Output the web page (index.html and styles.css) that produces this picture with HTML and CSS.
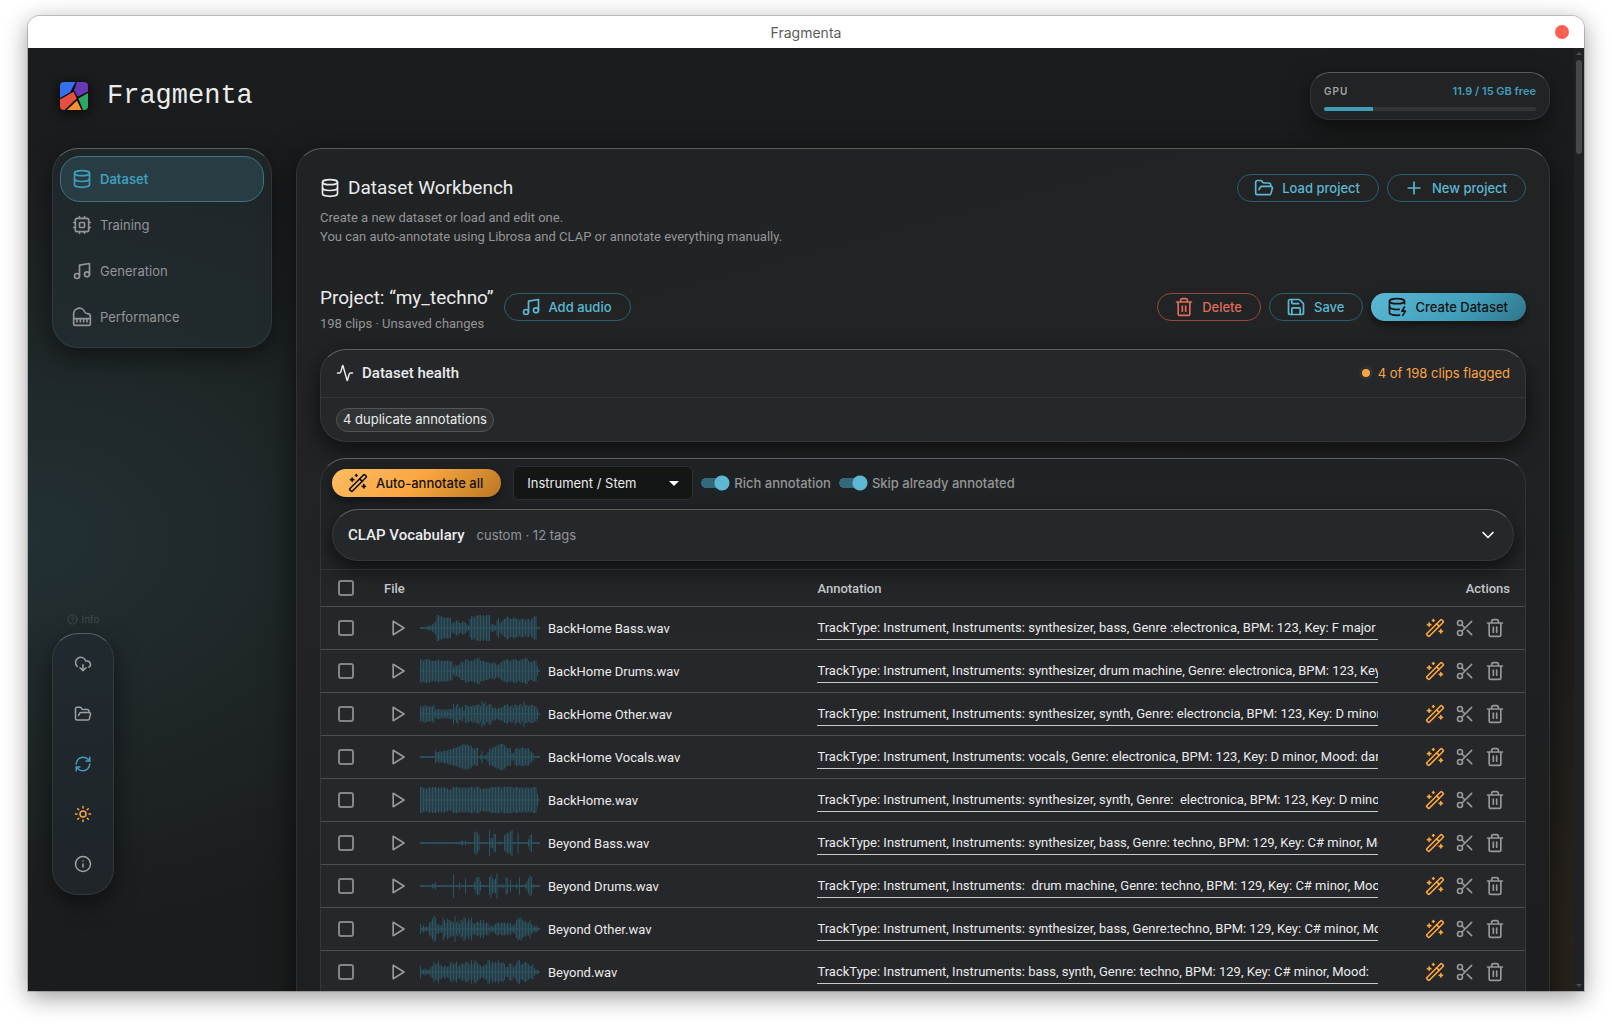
FILE: index.html
```html
<!DOCTYPE html>
<html lang="en">
<head>
    <meta charset="UTF-8">
    <meta name="viewport" content="width=device-width, initial-scale=1.0">
    <title>Fragmenta</title>
    <link rel="stylesheet" href="styles.css">
</head>
<body>

<svg class="sprite" aria-hidden="true">
    <symbol id="database" viewBox="0 0 24 24"><ellipse cx="12" cy="5" rx="9" ry="3"/><path d="M3 5v14a9 3 0 0 0 18 0V5"/><path d="M3 12a9 3 0 0 0 18 0"/></symbol>
    <symbol id="database-zap" viewBox="0 0 24 24"><ellipse cx="12" cy="5" rx="9" ry="3"/><path d="M3 5v14a9 3 0 0 0 12 2.84"/><path d="M21 5v3"/><path d="M21 12l-3 5h4l-3 5"/><path d="M3 12a9 3 0 0 0 11.59 2.87"/></symbol>
    <symbol id="cpu" viewBox="0 0 24 24"><rect x="4" y="4" width="16" height="16" rx="2"/><rect x="9" y="9" width="6" height="6" rx="1"/><path d="M15 2v2M15 20v2M2 15h2M2 9h2M20 15h2M20 9h2M9 2v2M9 20v2"/></symbol>
    <symbol id="music" viewBox="0 0 24 24"><path d="M9 18V5l12-2v13"/><circle cx="6" cy="18" r="3"/><circle cx="18" cy="16" r="3"/></symbol>
    <symbol id="piano" viewBox="0 0 24 24"><path d="M18.5 8c-1.4 0-2.6-.8-3.2-2A6.87 6.87 0 0 0 2 9v11a2 2 0 0 0 2 2h16a2 2 0 0 0 2-2v-8.5C22 9.6 20.4 8 18.5 8"/><path d="M2 14h20M6 14v4M10 14v4M14 14v4M18 14v4"/></symbol>
    <symbol id="folder-open" viewBox="0 0 24 24"><path d="m6 14 1.5-2.9A2 2 0 0 1 9.24 10H20a2 2 0 0 1 1.94 2.5l-1.54 6a2 2 0 0 1-1.95 1.5H4a2 2 0 0 1-2-2V5a2 2 0 0 1 2-2h3.9a2 2 0 0 1 1.69.9l.81 1.2a2 2 0 0 0 1.67.9H18a2 2 0 0 1 2 2v2"/></symbol>
    <symbol id="plus" viewBox="0 0 24 24"><path d="M5 12h14M12 5v14"/></symbol>
    <symbol id="trash" viewBox="0 0 24 24"><path d="M3 6h18M19 6v14a2 2 0 0 1-2 2H7a2 2 0 0 1-2-2V6M8 6V4a2 2 0 0 1 2-2h4a2 2 0 0 1 2 2v2M10 11v6M14 11v6"/></symbol>
    <symbol id="save" viewBox="0 0 24 24"><path d="M15.2 3a2 2 0 0 1 1.4.6l3.8 3.8a2 2 0 0 1 .6 1.4V19a2 2 0 0 1-2 2H5a2 2 0 0 1-2-2V5a2 2 0 0 1 2-2z"/><path d="M17 21v-7a1 1 0 0 0-1-1H8a1 1 0 0 0-1 1v7M7 3v4a1 1 0 0 0 1 1h7"/></symbol>
    <symbol id="activity" viewBox="0 0 24 24"><path d="M22 12h-2.48a2 2 0 0 0-1.93 1.46l-2.35 8.36a.25.25 0 0 1-.48 0L9.24 2.18a.25.25 0 0 0-.48 0l-2.35 8.36A2 2 0 0 1 4.49 12H2"/></symbol>
    <symbol id="wand" viewBox="0 0 24 24"><path d="m21.64 3.64-1.28-1.28a1.21 1.21 0 0 0-1.72 0L2.36 18.64a1.21 1.21 0 0 0 0 1.72l1.28 1.28a1.2 1.2 0 0 0 1.72 0L21.64 5.36a1.2 1.2 0 0 0 0-1.72"/><path d="m14 7 3 3M5 6v4M19 14v4M10 2v2M7 8H3M21 16h-4M11 3H9"/></symbol>
    <symbol id="scissors" viewBox="0 0 24 24"><circle cx="6" cy="6" r="3"/><path d="M8.12 8.12 12 12M20 4 8.12 15.88"/><circle cx="6" cy="18" r="3"/><path d="M14.8 14.8 20 20"/></symbol>
    <symbol id="play" viewBox="0 0 24 24"><path d="M5 4l13 8-13 8z"/></symbol>
    <symbol id="chevron" viewBox="0 0 24 24"><path d="m6 9 6 6 6-6"/></symbol>
    <symbol id="help" viewBox="0 0 24 24"><circle cx="12" cy="12" r="10"/><path d="M9.09 9a3 3 0 0 1 5.83 1c0 2-3 3-3 3M12 17h.01"/></symbol>
    <symbol id="cloud" viewBox="0 0 24 24"><path d="M12 13v8l-4-4M12 21l4-4"/><path d="M4.39 15.27A7 7 0 1 1 15.71 8h1.79a4.5 4.5 0 0 1 2.44 8.28"/></symbol>
    <symbol id="refresh" viewBox="0 0 24 24"><path d="M3 12a9 9 0 0 1 9-9 9.75 9.75 0 0 1 6.74 2.74L21 8"/><path d="M21 3v5h-5"/><path d="M21 12a9 9 0 0 1-9 9 9.75 9.75 0 0 1-6.74-2.74L3 16"/><path d="M8 16H3v5"/></symbol>
    <symbol id="sun" viewBox="0 0 24 24"><circle cx="12" cy="12" r="4"/><path d="M12 2v2M12 20v2M4.93 4.93l1.41 1.41M17.66 17.66l1.41 1.41M2 12h2M20 12h2M6.34 17.66l-1.41 1.41M19.07 4.93l-1.41 1.41"/></symbol>
    <symbol id="info" viewBox="0 0 24 24"><circle cx="12" cy="12" r="10"/><path d="M12 16v-4M12 8h.01"/></symbol>
</svg>

<div class="window">
    <div class="titlebar">
        <span>Fragmenta</span>
        <button class="close" aria-label="Close"></button>
    </div>

    <div class="app">
        <div class="content">
            <header class="header">
                <div class="brand">
                    <svg class="logo" viewBox="0 0 28 28" aria-hidden="true">
                        <defs><clipPath id="logo-clip"><rect width="28" height="28" rx="4"/></clipPath></defs>
                        <g clip-path="url(#logo-clip)">
                            <path fill="#3370ee" d="M0 0h15.500L10 10.500 0 16z"/>
                            <path fill="#6638b4" d="M17 0h11v9.500L17.800 14.800 14 8.500z"/>
                            <path fill="#e8503e" d="M0 17.500 13.500 9.800 16.800 16.500 4.500 28H0z"/>
                            <path fill="#2fa566" d="M28 11v17h-5L18.300 16.500z"/>
                            <path fill="#f6912c" d="M7 28 17 18.500 21.500 28z"/>
                        </g>
                    </svg>
                    <span class="brand-name">Fragmenta</span>
                </div>
                <div class="gpu">
                    <div class="gpu-row">
                        <span class="gpu-label">GPU</span>
                        <span class="gpu-value">11.9 / 15 GB free</span>
                    </div>
                    <div class="gpu-bar"><div class="gpu-fill" style="width: 23%"></div></div>
                </div>
            </header>

            <div class="layout">
                <aside class="sidebar">
                    <nav class="nav">
                        <a href="#" class="nav-item active"><svg class="icon"><use href="#database"/></svg>Dataset</a>
                        <a href="#" class="nav-item"><svg class="icon"><use href="#cpu"/></svg>Training</a>
                        <a href="#" class="nav-item"><svg class="icon"><use href="#music"/></svg>Generation</a>
                        <a href="#" class="nav-item"><svg class="icon"><use href="#piano"/></svg>Performance</a>
                    </nav>
                    <div class="dock-area">
                        <div class="dock-label"><svg class="icon"><use href="#help"/></svg>Info</div>
                        <div class="dock">
                            <button aria-label="Download models"><svg class="icon"><use href="#cloud"/></svg></button>
                            <button aria-label="Open folder"><svg class="icon"><use href="#folder-open"/></svg></button>
                            <button class="teal" aria-label="Refresh"><svg class="icon"><use href="#refresh"/></svg></button>
                            <button class="orange" aria-label="Toggle theme"><svg class="icon"><use href="#sun"/></svg></button>
                            <button aria-label="About"><svg class="icon"><use href="#info"/></svg></button>
                        </div>
                    </div>
                </aside>

                <main class="panel">
                    <div class="row">
                        <h1><svg class="icon"><use href="#database"/></svg>Dataset Workbench</h1>
                        <div class="buttons">
                            <button class="btn"><svg class="icon"><use href="#folder-open"/></svg>Load project</button>
                            <button class="btn"><svg class="icon"><use href="#plus"/></svg>New project</button>
                        </div>
                    </div>
                    <p class="intro">Create a new dataset or load and edit one.<br>You can auto-annotate using Librosa and CLAP or annotate everything manually.</p>

                    <div class="row project">
                        <div class="project-info">
                            <div>
                                <h2>Project: “my_techno”</h2>
                                <p class="muted">198 clips · Unsaved changes</p>
                            </div>
                            <button class="btn"><svg class="icon"><use href="#music"/></svg>Add audio</button>
                        </div>
                        <div class="buttons">
                            <button class="btn danger"><svg class="icon"><use href="#trash"/></svg>Delete</button>
                            <button class="btn"><svg class="icon"><use href="#save"/></svg>Save</button>
                            <button class="btn primary"><svg class="icon"><use href="#database-zap"/></svg>Create Dataset</button>
                        </div>
                    </div>

                    <section class="card health">
                        <div class="health-head">
                            <h3><svg class="icon"><use href="#activity"/></svg>Dataset health</h3>
                            <span class="flagged">4 of 198 clips flagged</span>
                        </div>
                        <div class="health-body"><span class="chip">4 duplicate annotations</span></div>
                    </section>

                    <section class="card clips">
                        <div class="toolbar">
                            <button class="btn auto"><svg class="icon"><use href="#wand"/></svg>Auto-annotate all</button>
                            <div class="select">
                                <select aria-label="Annotation type"><option>Instrument / Stem</option></select>
                                <svg class="caret" viewBox="0 0 10 5" aria-hidden="true"><path d="M0 0h10L5 5z"/></svg>
                            </div>
                            <label class="switch"><input type="checkbox" checked>Rich annotation</label>
                            <label class="switch"><input type="checkbox" checked>Skip already annotated</label>
                        </div>
                        <button class="vocab">
                            <span class="vocab-title">CLAP Vocabulary</span>
                            <span class="vocab-meta">custom · 12 tags</span>
                            <svg class="icon"><use href="#chevron"/></svg>
                        </button>
                        <table>
                            <thead>
                                <tr>
                                    <th class="col-check"><input type="checkbox" class="check" aria-label="Select all"></th>
                                    <th class="col-file">File</th>
                                    <th>Annotation</th>
                                    <th class="col-actions">Actions</th>
                                </tr>
                            </thead>
                            <tbody id="clips"></tbody>
                        </table>
                    </section>
                </main>
            </div>
        </div>
        <div class="scrollbar" aria-hidden="true">
            <svg viewBox="0 0 6 3"><path d="M0 3 3 0l3 3z"/></svg>
            <div class="thumb"></div>
            <svg viewBox="0 0 6 3"><path d="M0 0h6L3 3z"/></svg>
        </div>
    </div>
</div>

<script src="script.js"></script>
</body>
</html>
```

FILE: script.js
```js
// Each clip: file name, annotation, waveform peaks (one digit per bar, 0 = silence)
const clips = [
    ['BackHome Bass.wav',
     'TrackType: Instrument, Instruments: synthesizer, bass, Genre :electronica, BPM: 123, Key: F major',
     '00000111234998877777733455334432168878999898999222157345678766776656665665678800'],
    ['BackHome Drums.wav',
     'TrackType: Instrument, Instruments: synthesizer, drum machine, Genre: electronica, BPM: 123, Key',
     '88788887777787777777672434466688777788997776665556544567788777888778889976677730'],
    ['BackHome Other.wav',
     'TrackType: Instrument, Instruments: synthesizer, synth, Genre: electroncia, BPM: 123, Key: D minor',
     '55565555562333232323337467445266555656675978567744434445667556476567596656665530'],
    ['BackHome Vocals.wav',
     'TrackType: Instrument, Instruments: vocals, Genre: electronica, BPM: 123, Key: D minor, Mood: dark',
     '00000000004334344445556667788989887656601401136567788999876662256656665664320000'],
    ['BackHome.wav',
     'TrackType: Instrument, Instruments: synthesizer, synth, Genre:  electronica, BPM: 123, Key: D minor',
     '99888898999898989887789999898989899989998788888999999989999999899989898989899940'],
    ['Beyond Bass.wav',
     'TrackType: Instrument, Instruments: synthesizer, bass, Genre: techno, BPM: 129, Key: C# minor, Mood',
     '00000000000000000000000000011010000078750000009336600100567789000700000025600000'],
    ['Beyond Drums.wav',
     'TrackType: Instrument, Instruments:  drum machine, Genre: techno, BPM: 129, Key: C# minor, Mood',
     '00000000112000000000008000200050000025663000006854590101065040001060001357610000'],
    ['Beyond Other.wav',
     'TrackType: Instrument, Instruments: synthesizer, bass, Genre:techno, BPM: 129, Key: C# minor, Mood',
     '31211145798332286476554945365874758434546463441212344344434342236878655446321210'],
    ['Beyond.wav',
     'TrackType: Instrument, Instruments: bass, synth, Genre: techno, BPM: 129, Key: C# minor, Mood:',
     '41121113475685434434675674456577658578654345588576768667533565346885567654452110']
];

const icon = name => `<svg class="icon"><use href="#${name}"/></svg>`;

function waveform(peaks) {
    const step = 120 / peaks.length;
    let bars = '';
    [...peaks].forEach((peak, i) => {
        const half = peak === '0' ? 1 : 1 + peak * 12 / 9;
        bars += `M${i * step + 0.5} ${(13 - half).toFixed(1)}v${(half * 2).toFixed(1)}`;
    });
    return `<svg class="wave" viewBox="0 0 120 26"><path class="wave-base" d="M0 13h120"/><path d="${bars}"/></svg>`;
}

document.getElementById('clips').innerHTML = clips.map(([name, text, peaks]) => `
    <tr>
        <td class="col-check"><input type="checkbox" class="check" aria-label="Select ${name}"></td>
        <td class="col-file"><div class="file">
            <button class="icon-btn" aria-label="Play">${icon('play')}</button>
            ${waveform(peaks)}<span>${name}</span>
        </div></td>
        <td><input type="text" class="annotation" aria-label="Annotation for ${name}" value="${text}"></td>
        <td class="col-actions"><div class="actions">
            <button class="icon-btn orange" aria-label="Auto-annotate">${icon('wand')}</button>
            <button class="icon-btn" aria-label="Trim">${icon('scissors')}</button>
            <button class="icon-btn" aria-label="Delete">${icon('trash')}</button>
        </div></td>
    </tr>`).join('');
```

FILE: styles.css
```css
:root {
    --teal: #409eba;
    --teal-light: #5cb8d3;
    --orange: #f9a63f;
    --text: #ebebeb;
    --muted: #949597;
    --line: rgba(255, 255, 255, 0.08);
    --line-top: rgba(255, 255, 255, 0.26);
    --ui: Inter, "Liberation Sans", sans-serif;
    --body: Roboto, "Liberation Sans", sans-serif;
}
* {
    box-sizing: border-box;
}
body {
    margin: 0;
    height: 100vh;
    padding: 16px 28px 40px;
    background: #fff;
    color: var(--text);
    font-family: var(--body);
    font-size: 13px;
}
h1, h2, h3, p {
    margin: 0;
    font-weight: 400;
}
button, input, select {
    font-family: inherit;
    font-size: inherit;
    color: inherit;
}
button {
    padding: 0;
    border: none;
    background: none;
    cursor: pointer;
}
.sprite {
    display: none;
}
.icon {
    width: 20px;
    height: 20px;
    flex: none;
    fill: none;
    stroke: currentColor;
    stroke-width: 2;
    stroke-linecap: round;
    stroke-linejoin: round;
}
.teal {
    color: var(--teal);
}
.orange {
    color: var(--orange);
}

/* window */
.window {
    height: 100%;
    display: flex;
    flex-direction: column;
    border-radius: 12px 12px 0 0;
    box-shadow: 0 0 0 1px rgba(0, 0, 0, 0.18), 0 6px 24px rgba(0, 0, 0, 0.4);
}
.titlebar {
    height: 32px;
    flex: none;
    display: grid;
    grid-template-columns: 1fr auto 1fr;
    align-items: center;
    padding: 0 15px;
    border-radius: 12px 12px 0 0;
    background: #fff;
    color: #5b5b5b;
    font-family: var(--ui);
    font-size: 14px;
}
.titlebar span {
    grid-column: 2;
}
.close {
    justify-self: end;
    width: 14px;
    height: 14px;
    border-radius: 50%;
    background: #ff5f52;
}
.app {
    flex: 1;
    min-height: 0;
    display: flex;
    overflow: hidden;
    background:
        radial-gradient(ellipse 50% 60% at 0% 52%, rgba(60, 120, 130, 0.22), transparent 70%),
        radial-gradient(ellipse 30% 50% at 100% 95%, rgba(150, 90, 20, 0.12), transparent 90%),
        #1b1c1d;
}
.content {
    flex: 1;
    min-width: 0;
    display: flex;
    flex-direction: column;
    padding: 24px 24px 0;
}
.scrollbar {
    width: 10px;
    display: flex;
    flex-direction: column;
    align-items: center;
    gap: 5px;
    padding: 4px 0;
    background: #202124;
}
.scrollbar svg {
    width: 6px;
    height: 3px;
    fill: #4c4d50;
}
.scrollbar svg:last-child {
    margin-top: auto;
}
.thumb {
    width: 6px;
    height: 10%;
    border-radius: 3px;
    background: #47484b;
}

/* header */
.header {
    display: flex;
    justify-content: space-between;
    margin-bottom: 28px;
}
.brand {
    display: flex;
    align-items: center;
    gap: 19px;
    padding-left: 8px;
}
.logo {
    width: 28px;
    height: 28px;
    filter: drop-shadow(0 2px 6px #000);
}
.brand-name {
    font-family: "Liberation Mono", monospace;
    font-size: 27px;
    line-height: 44px;
}
.gpu {
    width: 240px;
    height: 48px;
    padding: 11px 13px 0;
    border: 1px solid var(--line);
    border-top-color: var(--line-top);
    border-radius: 20px;
    background: #222325;
    box-shadow: 0 8px 24px rgba(0, 0, 0, 0.5);
    font-family: var(--ui);
    font-size: 11px;
    font-weight: 600;
    line-height: 14px;
}
.gpu-row {
    display: flex;
    justify-content: space-between;
}
.gpu-label {
    font-size: 10px;
    letter-spacing: 1px;
    color: #a5a6a8;
}
.gpu-value {
    color: var(--teal);
}
.gpu-bar {
    height: 4px;
    margin-top: 9px;
    border-radius: 2px;
    background: #343538;
    overflow: hidden;
}
.gpu-fill {
    height: 100%;
    background: var(--teal);
}

/* layout */
.layout {
    flex: 1;
    min-height: 0;
    display: grid;
    grid-template-columns: 220px minmax(0, 1fr);
    grid-template-rows: minmax(0, 1fr);
    gap: 24px;
}
.sidebar {
    display: flex;
    flex-direction: column;
    justify-content: space-between;
    align-items: flex-start;
    padding-bottom: 96px;
}
.nav, .dock, .panel, .card, .vocab {
    border: 1px solid var(--line);
    border-top-color: var(--line-top);
    border-radius: 26px;
}
.nav {
    width: 100%;
    padding: 7px;
    background: rgba(38, 50, 56, 0.45);
    box-shadow: 0 8px 24px rgba(0, 0, 0, 0.5);
}
.nav-item {
    height: 46px;
    display: flex;
    align-items: center;
    gap: 8px;
    padding: 0 11px;
    border: 1px solid transparent;
    border-radius: 20px;
    color: var(--muted);
    font-family: var(--ui);
    text-decoration: none;
}
.nav-item.active {
    border-color: #3f7481;
    background: #283c44;
    color: var(--teal);
    font-weight: 600;
}
.dock-label {
    display: flex;
    align-items: center;
    justify-content: center;
    gap: 4px;
    height: 16px;
    margin-bottom: 6px;
    color: #43494b;
    font-family: var(--ui);
    font-size: 10px;
}
.dock-label .icon {
    width: 11px;
    height: 11px;
}
.dock {
    display: flex;
    flex-direction: column;
    padding: 5px;
    background: rgba(34, 42, 48, 0.6);
    box-shadow: 0 8px 24px rgba(0, 0, 0, 0.5);
}
.dock button {
    width: 50px;
    height: 50px;
    display: flex;
    align-items: center;
    justify-content: center;
    color: #a0a1a3;
}
.dock .teal {
    color: var(--teal);
}
.dock .orange {
    color: var(--orange);
}
.dock .icon {
    width: 18px;
    height: 18px;
}

/* panel */
.panel {
    align-self: start;
    padding: 25px 23px 23px;
    background: linear-gradient(165deg, #202325, #222324 40%, #1f2021 60%, #1c1d1e);
    box-shadow: 0 8px 32px rgba(0, 0, 0, 0.6);
}
.row {
    display: flex;
    align-items: center;
    justify-content: space-between;
}
.buttons {
    display: flex;
    gap: 8px;
}
h1 {
    display: flex;
    align-items: center;
    gap: 8px;
    font-size: 19px;
    line-height: 28px;
}
h2 {
    font-size: 19px;
    line-height: 33px;
}
.intro {
    margin-top: 6px;
}
.intro, .muted {
    line-height: 19px;
    color: var(--muted);
}
.btn {
    height: 28px;
    display: flex;
    align-items: center;
    gap: 8px;
    padding: 0 18px 0 16px;
    border: 1px solid #2d5f70;
    border-radius: 14px;
    color: var(--teal-light);
    font-family: var(--ui);
    font-weight: 500;
}
.btn.danger {
    border-color: #92493f;
    color: #df6b5b;
}
.btn.primary, .btn.auto {
    border: none;
    color: #121212;
    box-shadow: 0 4px 10px rgba(0, 0, 0, 0.5);
}
.btn.primary {
    background: linear-gradient(135deg, #5cb8d3, #409eba 60%, #2f7589);
}
.btn.auto {
    background: linear-gradient(135deg, #fdbc62, #f9a63f 50%, #bb7623);
}
.project {
    margin: 35px 0 16px;
}
.project-info {
    display: flex;
    align-items: center;
    gap: 10px;
}

/* cards */
.health {
    background: #25272a;
    box-shadow: 0 8px 24px rgba(0, 0, 0, 0.6);
}
.health-head {
    height: 48px;
    display: flex;
    align-items: center;
    justify-content: space-between;
    padding: 0 15px 2px;
    border-bottom: 1px solid var(--line);
}
h3 {
    display: flex;
    align-items: center;
    gap: 8px;
    font-size: 15px;
    font-weight: 500;
}
h3 .icon {
    width: 18px;
    height: 18px;
}
.flagged {
    display: flex;
    align-items: center;
    gap: 8px;
    color: var(--orange);
    font-family: var(--ui);
}
.flagged::before {
    content: "";
    width: 8px;
    height: 8px;
    border-radius: 50%;
    background: var(--orange);
    box-shadow: 0 0 0 3px #303134;
}
.health-body {
    padding: 10px 15px 9px;
    display: flex;
}
.chip {
    height: 24px;
    padding: 0 6px;
    border: 1px solid #535657;
    border-radius: 12px;
    background: #303436;
    font-family: var(--ui);
    line-height: 21px;
}
.clips {
    margin-top: 16px;
    padding-bottom: 40px;
    background: linear-gradient(#1f2224, #25272a 180px);
}
.toolbar {
    display: flex;
    align-items: center;
    gap: 8px;
    padding: 7px 11px 9px;
}
.btn.auto {
    margin-right: 4px;
}
.select {
    position: relative;
    width: 180px;
}
.select select {
    appearance: none;
    display: block;
    width: 100%;
    height: 34px;
    padding: 0 13px;
    border: 1px solid #2e2f30;
    border-radius: 6px;
    background: #141515;
    font-family: var(--ui);
}
.caret {
    position: absolute;
    right: 14px;
    top: 15px;
    width: 10px;
    height: 5px;
    fill: #fff;
    pointer-events: none;
}
.switch {
    display: flex;
    align-items: center;
    gap: 4px;
    color: var(--muted);
    font-family: var(--ui);
    font-weight: 500;
}
.switch input {
    appearance: none;
    width: 29px;
    height: 16px;
    margin: 0;
    border-radius: 8px;
    background:
        radial-gradient(circle at 21px 8px, var(--teal-light) 7px, transparent 8px),
        linear-gradient(#33697b, #33697b) 5px 3px / 16px 10px no-repeat,
        radial-gradient(circle at 5px 8px, #33697b 5px, transparent 5px);
}
.vocab {
    width: calc(100% - 22px);
    height: 52px;
    margin: 0 11px 8px;
    display: flex;
    align-items: center;
    gap: 12px;
    padding: 0 15px;
    background: #25282b;
    box-shadow: 0 8px 20px rgba(0, 0, 0, 0.6);
}
.vocab-title {
    font-size: 15px;
    font-weight: 500;
}
.vocab-meta {
    color: var(--muted);
    font-family: var(--ui);
}
.vocab .icon {
    margin-left: auto;
    color: #fff;
}

/* table */
table {
    width: 100%;
    table-layout: fixed;
    border-collapse: collapse;
    border-top: 1px solid rgba(255, 255, 255, 0.08);
}
th {
    height: 37px;
    padding: 0 12px;
    text-align: left;
    font-size: 13px;
    font-weight: 500;
    color: #c4c5c6;
}
th.col-actions {
    text-align: right;
}
td {
    height: 43px;
    padding: 0 12px;
}
tr {
    border-bottom: 1px solid #4c4d4f;
}
.col-check {
    width: 51px;
    padding: 0 17px;
}
.col-file {
    width: 36%;
}
.col-actions {
    width: 135px;
    padding: 0 15px;
}
.check {
    appearance: none;
    display: block;
    width: 16px;
    height: 16px;
    margin: 0;
    border: 2px solid #848587;
    border-radius: 3px;
}
.file {
    display: flex;
    align-items: center;
}
.file .icon-btn {
    margin-right: 6px;
}
.file span {
    margin-left: 8px;
}
.wave {
    width: 120px;
    height: 26px;
    fill: none;
    stroke: #2c5563;
    stroke-width: 1;
}
.wave-base {
    stroke: #293f48;
    stroke-width: 2;
}
.annotation {
    display: block;
    width: 100%;
    height: 24px;
    padding: 0;
    border: none;
    border-bottom: 1px solid #c9cacb;
    border-radius: 0;
    background: none;
    outline: none;
}
.icon-btn {
    width: 30px;
    height: 30px;
    display: flex;
    align-items: center;
    justify-content: center;
    color: #97989a;
}
.icon-btn.orange {
    color: var(--orange);
}
.actions {
    display: flex;
    justify-content: flex-end;
}
```
